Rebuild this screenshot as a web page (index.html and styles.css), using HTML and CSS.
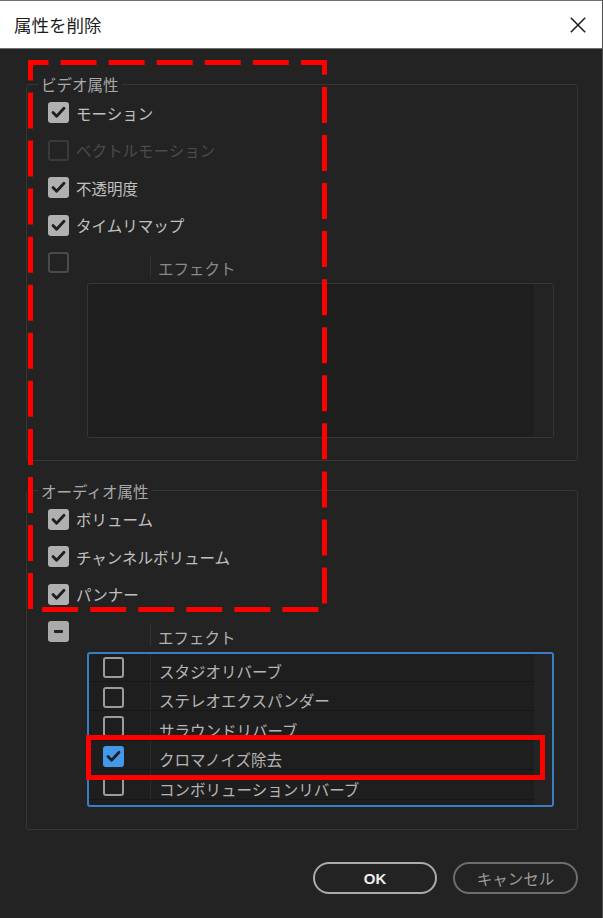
FILE: index.html
```html
<!DOCTYPE html>
<html lang="ja">
<head>
<meta charset="utf-8">
<title>属性を削除</title>
<link rel="stylesheet" href="styles.css">
</head>
<body>
<div class="window">
  <header class="titlebar">
    <span class="title">属性を削除</span>
    <span class="close" aria-label="閉じる">
      <svg width="16" height="16" viewBox="0 0 16 16"><path d="M0.8 0.8 15.2 15.2 M15.2 0.8 0.8 15.2" stroke="#1a1a1a" stroke-width="1.5" fill="none"/></svg>
    </span>
  </header>

  <main class="content">
    <fieldset class="group">
      <legend>ビデオ属性</legend>
      <ul class="opts">
        <li class="opt"><span class="cb on"><svg width="21" height="21" viewBox="0 0 21 21"><path d="M5 10.6 8.6 14.3 16 6.3" fill="none" stroke="#1f1f1f" stroke-width="2.8" stroke-linecap="round" stroke-linejoin="round"/></svg></span>モーション</li>
        <li class="opt disabled"><span class="cb off-faint"></span>ベクトルモーション</li>
        <li class="opt"><span class="cb on"><svg width="21" height="21" viewBox="0 0 21 21"><path d="M5 10.6 8.6 14.3 16 6.3" fill="none" stroke="#1f1f1f" stroke-width="2.8" stroke-linecap="round" stroke-linejoin="round"/></svg></span>不透明度</li>
        <li class="opt"><span class="cb on"><svg width="21" height="21" viewBox="0 0 21 21"><path d="M5 10.6 8.6 14.3 16 6.3" fill="none" stroke="#1f1f1f" stroke-width="2.8" stroke-linecap="round" stroke-linejoin="round"/></svg></span>タイムリマップ</li>
      </ul>
      <div class="fx-head">
        <span class="cb off-dim"></span>
        <span class="colsep"></span>
        <span class="hd dim">エフェクト</span>
      </div>
      <div class="fx-list video">
        <ul class="rows"></ul>
        <div class="gutter"></div>
      </div>
    </fieldset>

    <fieldset class="group audio-group">
      <legend>オーディオ属性</legend>
      <ul class="opts">
        <li class="opt"><span class="cb on"><svg width="21" height="21" viewBox="0 0 21 21"><path d="M5 10.6 8.6 14.3 16 6.3" fill="none" stroke="#1f1f1f" stroke-width="2.8" stroke-linecap="round" stroke-linejoin="round"/></svg></span>ボリューム</li>
        <li class="opt"><span class="cb on"><svg width="21" height="21" viewBox="0 0 21 21"><path d="M5 10.6 8.6 14.3 16 6.3" fill="none" stroke="#1f1f1f" stroke-width="2.8" stroke-linecap="round" stroke-linejoin="round"/></svg></span>チャンネルボリューム</li>
        <li class="opt"><span class="cb on"><svg width="21" height="21" viewBox="0 0 21 21"><path d="M5 10.6 8.6 14.3 16 6.3" fill="none" stroke="#1f1f1f" stroke-width="2.8" stroke-linecap="round" stroke-linejoin="round"/></svg></span>パンナー</li>
      </ul>
      <div class="fx-head">
        <span class="cb mixed"></span>
        <span class="colsep"></span>
        <span class="hd">エフェクト</span>
      </div>
      <div class="fx-list audio">
        <ul class="rows">
          <li class="row"><span class="cell-cb"><span class="cb off"></span></span><span class="name">スタジオリバーブ</span></li>
          <li class="row"><span class="cell-cb"><span class="cb off"></span></span><span class="name">ステレオエクスパンダー</span></li>
          <li class="row"><span class="cell-cb"><span class="cb off"></span></span><span class="name">サラウンドリバーブ</span></li>
          <li class="row"><span class="cell-cb"><span class="cb blue"><svg width="21" height="21" viewBox="0 0 21 21"><path d="M5 10.6 8.6 14.3 16 6.3" fill="none" stroke="#1b1e22" stroke-width="2.8" stroke-linecap="round" stroke-linejoin="round"/></svg></span></span><span class="name">クロマノイズ除去</span></li>
          <li class="row"><span class="cell-cb"><span class="cb off"></span></span><span class="name">コンボリューションリバーブ</span></li>
        </ul>
        <div class="gutter"></div>
      </div>
    </fieldset>

    <div class="actions">
      <button class="btn ok">OK</button>
      <button class="btn cancel">キャンセル</button>
    </div>
  </main>

  <svg class="marks" width="603" height="918" viewBox="0 0 603 918">
    <rect x="30.5" y="62.5" width="294" height="547" fill="none" stroke="#ff0000" stroke-width="5" stroke-dasharray="36 12.06" stroke-dashoffset="18"/>
    <rect x="88.5" y="737.5" width="454" height="40" fill="none" stroke="#ff0000" stroke-width="5"/>
  </svg>
</div>
</body>
</html>
```

FILE: styles.css
```css
* {
  box-sizing: border-box;
}

html,
body {
  margin: 0;
  padding: 0;
}

body {
  width: 603px;
  height: 918px;
  overflow: hidden;
  background: #232323;
  font-family: "Noto Sans CJK JP", "Noto Sans", sans-serif;
}

.window {
  position: relative;
  width: 603px;
  height: 918px;
  background: #232323;
  border-right: 1px solid #4e4e4e;
}

.titlebar {
  height: 49px;
  background: #ffffff;
  border-top: 1px solid #707070;
  border-bottom: 1px solid #707070;
  display: flex;
  align-items: center;
  justify-content: space-between;
  padding: 0 16px 0 14px;
}

.title {
  font-size: 17.5px;
  line-height: 24px;
  color: #1c1c1c;
}

.close {
  display: block;
  width: 16px;
  height: 16px;
}

.close svg {
  display: block;
}

.content {
  padding: 25px 24px 0 26px;
}

.group {
  margin: 0;
  min-width: 0;
  border: 1px solid #363636;
  border-radius: 3px;
  padding: 0 23px 22px 11px;
}

.audio-group {
  margin-top: 19.5px;
}

.group legend {
  padding: 0 3px;
  font-size: 15.5px;
  line-height: 20px;
  color: #a9a9a9;
}

.opts {
  list-style: none;
  margin: 0;
  padding: 0 0 0 10px;
}

.opt {
  height: 37.5px;
  display: flex;
  align-items: center;
  gap: 7px;
  font-size: 15.5px;
  color: #c0c0c0;
}

.opt.disabled {
  color: #4b4b4b;
}

.cb {
  display: block;
  flex: none;
  width: 21px;
  height: 21px;
  border-radius: 3px;
}

.cb svg {
  display: block;
}

.cb.on {
  background: #b0b0b0;
}

.cb.blue {
  background: #4498ea;
}

.cb.mixed {
  background: #aaaaaa;
  display: flex;
  align-items: center;
  justify-content: center;
}

.cb.mixed::after {
  content: "";
  width: 9px;
  height: 3px;
  border-radius: 1px;
  background: #232323;
}

.cb.off {
  border: 2px solid #9b9b9b;
}

.cb.off-dim {
  border: 2px solid #4a4a4a;
}

.cb.off-faint {
  border: 2px solid #3a3a3a;
}

.fx-head {
  height: 39px;
  display: flex;
  align-items: flex-start;
  padding-left: 10px;
}

.fx-head .cb {
  margin-top: 8px;
}

.colsep {
  width: 1px;
  height: 22px;
  margin-top: 11px;
  margin-left: 81px;
  background: #323232;
}

.hd {
  margin-left: 7px;
  margin-top: 14px;
  font-size: 15.5px;
  line-height: 20px;
  color: #b3b3b3;
}

.hd.dim {
  color: #8a8a8a;
}

.fx-list {
  margin-left: 49px;
  height: 155px;
  display: flex;
  overflow: hidden;
  border-radius: 3px;
  background: #1e1e1e;
}

.fx-list.video {
  border: 1px solid #363636;
}

.fx-list.audio {
  border: 2px solid #3b7dc2;
}

.rows {
  flex: 1;
  list-style: none;
  margin: 0;
  padding: 0;
}

.audio .rows {
  margin-top: -2px;
}

.gutter {
  width: 19px;
  background: #232323;
}

.audio .gutter {
  width: 18px;
}

.row {
  height: 29.5px;
  display: flex;
  border-bottom: 1px solid #171717;
}

.cell-cb {
  width: 62px;
  flex: none;
  border-right: 1px solid #2b2b2b;
  padding: 5px 0 0 14px;
}

.name {
  padding: 8.5px 0 0 8px;
  font-size: 15.5px;
  line-height: 20px;
  color: #b5b5b5;
  white-space: nowrap;
}

.actions {
  display: flex;
  justify-content: flex-end;
  gap: 16px;
  margin-top: 32px;
}

.btn {
  height: 32px;
  padding: 0;
  border-radius: 16px;
  background: transparent;
  display: flex;
  align-items: center;
  justify-content: center;
  font-family: "Noto Sans CJK JP", "Noto Sans", sans-serif;
  font-size: 15.5px;
}

.btn.ok {
  width: 124px;
  border: 2px solid #ababab;
  color: #ececec;
  font-family: "Liberation Sans", "Noto Sans", sans-serif;
  font-weight: 700;
  font-size: 15px;
}

.btn.cancel {
  width: 125px;
  border: 2px solid #6e6e6e;
  color: #9c9c9c;
}

.marks {
  position: absolute;
  left: 0;
  top: 0;
  pointer-events: none;
}
```
